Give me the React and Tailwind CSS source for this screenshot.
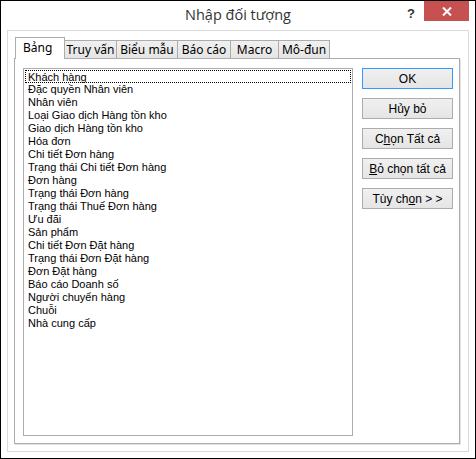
import React from "react"

const items = [
  "Khách hàng",
  "Đặc quyền Nhân viên",
  "Nhân viên",
  "Loại Giao dịch Hàng tồn kho",
  "Giao dịch Hàng tồn kho",
  "Hóa đơn",
  "Chi tiết Đơn hàng",
  "Trạng thái Chi tiết Đơn hàng",
  "Đơn hàng",
  "Trạng thái Đơn hàng",
  "Trạng thái Thuế Đơn hàng",
  "Ưu đãi",
  "Sản phẩm",
  "Chi tiết Đơn Đặt hàng",
  "Trạng thái Đơn Đặt hàng",
  "Đơn Đặt hàng",
  "Báo cáo Doanh số",
  "Người chuyển hàng",
  "Chuỗi",
  "Nhà cung cấp",
]

const tabs = [
  { label: "Truy vấn", w: "w-[53px]" },
  { label: "Biểu mẫu", w: "w-[62px]" },
  { label: "Báo cáo", w: "w-[54px]" },
  { label: "Macro", w: "w-[49px]" },
  { label: "Mô-đun", w: "w-[52px]" },
]

function DialogButton({ children, primary }) {
  return (
    <button
      className={
        "w-[91px] h-[21px] flex items-center justify-center text-[12px] text-black bg-gradient-to-b from-[#f0f0f0] to-[#e5e5e5] border " +
        (primary ? "border-[#3399ff]" : "border-[#acacac]")
      }
    >
      {children}
    </button>
  )
}

export default function App() {
  return (
    <div className="w-[476px] h-[459px] border border-black bg-white relative font-['Liberation_Sans',sans-serif] text-black">
      {/* title bar */}
      <div className="h-[29px] flex items-center justify-center pb-[1px]">
        <span className="text-[14.5px] text-[#333333] font-['Open_Sans',sans-serif] leading-none">Nhập đối tượng</span>
      </div>
      <span className="absolute left-[406px] top-[3px] text-[13px] font-bold text-[#333333]">?</span>
      <div className="absolute right-[6px] top-0 w-[45px] h-[20px] bg-[#c75050] flex items-center justify-center">
        <svg width="10" height="9" viewBox="0 0 10 9">
          <path d="M1 0.5 L9 8.5 M9 0.5 L1 8.5" stroke="white" strokeWidth="2" />
        </svg>
      </div>

      {/* group frame */}
      <div className="ml-[6px] w-[462px] h-[422px] border border-[#dadada] pl-[6px] pt-[6px]">
        {/* tabs */}
        <div className="flex items-end h-[21px] pl-[1px] font-['Noto_Sans',sans-serif] text-[12px]">
          <div className="relative z-10 w-[50px] border border-b-0 border-[#acacac] bg-white -mb-[1px] h-[22px] pl-[7px] pt-[1px]">
            Bảng
          </div>
          {tabs.map((t) => (
            <div
              key={t.label}
              className={
                t.w +
                " h-[18px] -ml-[1px] first:ml-0 border border-b-0 border-[#acacac] bg-gradient-to-b from-[#f0f0f0] to-[#e5e5e5] flex items-center justify-center leading-none"
              }
            >
              {t.label}
            </div>
          ))}
        </div>
        {/* panel */}
        <div className="w-[446px] h-[386px] border border-[#acacac] shadow-[1px_1px_0_#e3e3e3] bg-white flex pl-[8px] pt-[9px]">
          <div className="w-[330px] h-[368px] border border-[#acacac] p-[1px] text-[11px]">
            {items.map((it, i) => (
              <div
                key={it}
                className={
                  "h-[13px] leading-[13px] whitespace-nowrap " +
                  (i === 0 ? "border border-dotted border-black leading-[11px] pl-[2px]" : "pl-[3px]")
                }
              >
                {it}
              </div>
            ))}
          </div>
          <div className="ml-[9px] flex flex-col gap-[9px]">
            <DialogButton primary>OK</DialogButton>
            <DialogButton>Hủy bỏ</DialogButton>
            <DialogButton>
              C<u>h</u>ọn Tất cả
            </DialogButton>
            <DialogButton>
              <u>B</u>ỏ chọn tất cả
            </DialogButton>
            <DialogButton>
              Tùy ch<u>o</u>n &gt; &gt;
            </DialogButton>
          </div>
        </div>
      </div>
    </div>
  )
}
